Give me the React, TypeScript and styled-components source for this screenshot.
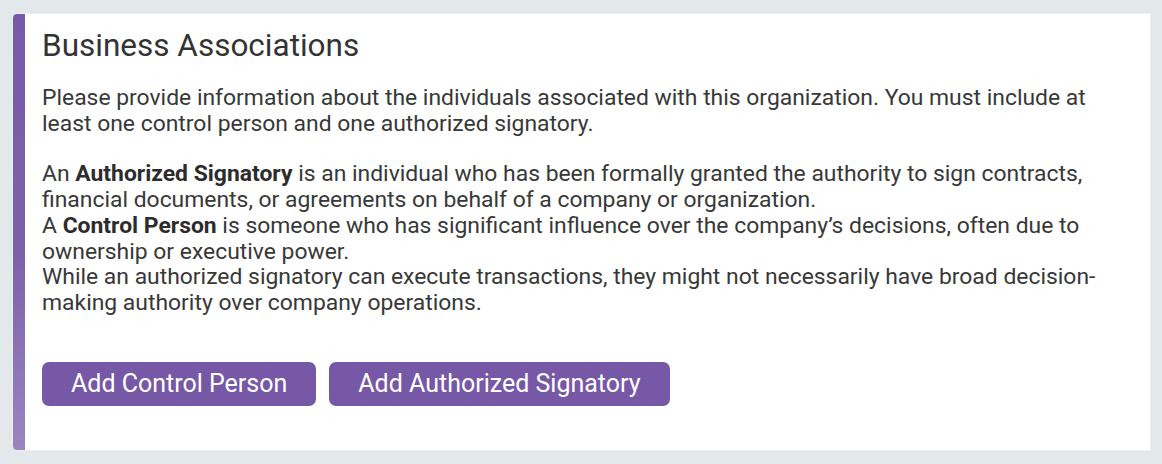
import React from 'react'
import styled, { createGlobalStyle } from 'styled-components'

const GlobalStyle = createGlobalStyle`
  html, body {
    margin: 0;
    padding: 0;
    background: #e3e8ea;
  }
  body {
    font-family: Roboto, "Liberation Sans", sans-serif;
    color: #363636;
  }
`

const Page = styled.div`
  padding: 14px 12px 14px 13px;
`

const Card = styled.section`
  display: flex;
  height: 436px;
  background: #ffffff;
  border-radius: 4px 0 0 4px;
  box-shadow: 0 0 0 1px #eceff0;
  overflow: hidden;
`

const Accent = styled.div`
  flex: 0 0 12px;
  background: linear-gradient(180deg, #7858a8 0%, #7d60aa 55%, #9a85c0 100%);
`

const Body = styled.div`
  flex: 1;
  padding: 14px 30px 0 17px;
`

const Title = styled.h2`
  margin: 0;
  font-size: 31.5px;
  line-height: 36px;
  font-weight: 400;
  color: #333;
`

const Text = styled.p<{ $gap?: number }>`
  margin: ${(p) => p.$gap ?? 21}px 0 0;
  font-size: 22.9px;
  line-height: 25.7px;
  color: #383838;

  strong {
    font-weight: 700;
    color: #2c2c2c;
  }
`

const Actions = styled.div`
  display: flex;
  gap: 13px;
  margin-top: 46px;
`

const Button = styled.button`
  height: 44px;
  padding: 0 29px;
  border: none;
  border-radius: 7px;
  background: #7658a6;
  color: #fff;
  font-family: Roboto, "Liberation Sans", sans-serif;
  font-size: 25px;
  cursor: pointer;
`

const App: React.FC = () => {
  return (
    <>
      <GlobalStyle />
      <Page>
        <Card>
          <Accent />
          <Body>
            <Title>Business Associations</Title>
            <Text>
              Please provide information about the individuals associated with this
              organization. You must include at least one control person and one
              authorized signatory.
            </Text>
            <Text $gap={25}>
              An <strong>Authorized Signatory</strong> is an individual who has been
              formally granted the authority to sign contracts, financial documents, or
              agreements on behalf of a company or organization.
              <br />
              A <strong>Control Person</strong> is someone who has significant influence
              over the company’s decisions, often due to ownership or executive power.
              <br />
              While an authorized signatory can execute transactions, they might not
              necessarily have broad decision-making authority over company operations.
            </Text>
            <Actions>
              <Button>Add Control Person</Button>
              <Button>Add Authorized Signatory</Button>
            </Actions>
          </Body>
        </Card>
      </Page>
    </>
  )
}

export default App
